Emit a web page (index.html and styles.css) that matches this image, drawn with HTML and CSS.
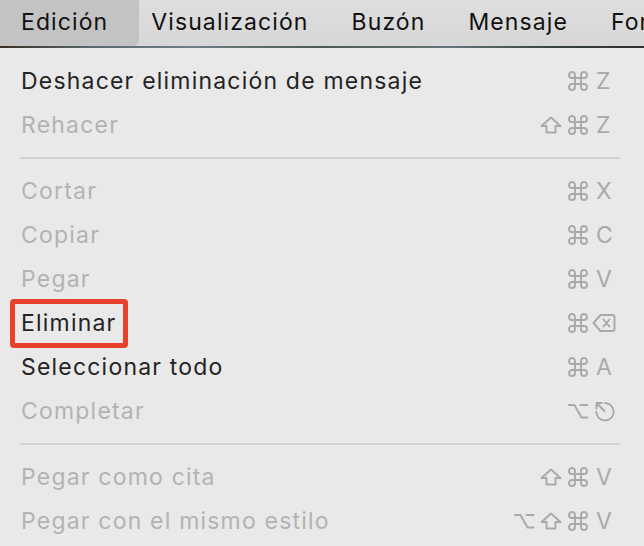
FILE: index.html
```html
<!DOCTYPE html>
<html lang="es">
<head>
<meta charset="utf-8">
<title>Edición</title>
<link rel="stylesheet" href="styles.css">
</head>
<body>
<div class="menubar">
  <span class="mb-item active">Edición</span>
  <span class="mb-item">Visualización</span>
  <span class="mb-item">Buzón</span>
  <span class="mb-item">Mensaje</span>
  <span class="mb-item">Formato</span>
</div>
<div class="strip"></div>
<div class="panel">
  <div class="row"><span class="label">Deshacer eliminación de mensaje</span>
    <span class="sc"><span class="mods"><svg class="ic cmd" viewBox="0 0 20 18"><path d="M7 6 V3 A3 3 0 1 0 4 6 H16 A3 3 0 1 0 13 3 V15 A3 3 0 1 0 16 12 H4 A3 3 0 1 0 7 15 Z"/></svg></span><span class="key">Z</span></span></div>
  <div class="row dis"><span class="label">Rehacer</span>
    <span class="sc"><span class="mods"><svg class="ic shift" viewBox="0 0 22 18"><path d="M11 1.5 L20.5 10 H15.5 V16.5 H6.5 V10 H1.5 Z"/></svg><svg class="ic cmd" viewBox="0 0 20 18"><path d="M7 6 V3 A3 3 0 1 0 4 6 H16 A3 3 0 1 0 13 3 V15 A3 3 0 1 0 16 12 H4 A3 3 0 1 0 7 15 Z"/></svg></span><span class="key">Z</span></span></div>
  <div class="sep"></div>
  <div class="row dis"><span class="label">Cortar</span>
    <span class="sc"><span class="mods"><svg class="ic cmd" viewBox="0 0 20 18"><path d="M7 6 V3 A3 3 0 1 0 4 6 H16 A3 3 0 1 0 13 3 V15 A3 3 0 1 0 16 12 H4 A3 3 0 1 0 7 15 Z"/></svg></span><span class="key">X</span></span></div>
  <div class="row dis"><span class="label">Copiar</span>
    <span class="sc"><span class="mods"><svg class="ic cmd" viewBox="0 0 20 18"><path d="M7 6 V3 A3 3 0 1 0 4 6 H16 A3 3 0 1 0 13 3 V15 A3 3 0 1 0 16 12 H4 A3 3 0 1 0 7 15 Z"/></svg></span><span class="key">C</span></span></div>
  <div class="row dis"><span class="label">Pegar</span>
    <span class="sc"><span class="mods"><svg class="ic cmd" viewBox="0 0 20 18"><path d="M7 6 V3 A3 3 0 1 0 4 6 H16 A3 3 0 1 0 13 3 V15 A3 3 0 1 0 16 12 H4 A3 3 0 1 0 7 15 Z"/></svg></span><span class="key">V</span></span></div>
  <div class="row highlight"><span class="label">Eliminar</span>
    <span class="sc"><span class="mods"><svg class="ic cmd" viewBox="0 0 20 18"><path d="M7 6 V3 A3 3 0 1 0 4 6 H16 A3 3 0 1 0 13 3 V15 A3 3 0 1 0 16 12 H4 A3 3 0 1 0 7 15 Z"/></svg></span><span class="key"><svg class="ic del" viewBox="0 0 24 20"><path d="M8.5 2 H20.5 Q22.5 2 22.5 4 V16 Q22.5 18 20.5 18 H8.5 L1.5 10 Z M11.5 6.5 L17.5 13.5 M17.5 6.5 L11.5 13.5"/></svg></span></span>
    <span class="annot"></span></div>
  <div class="row"><span class="label">Seleccionar todo</span>
    <span class="sc"><span class="mods"><svg class="ic cmd" viewBox="0 0 20 18"><path d="M7 6 V3 A3 3 0 1 0 4 6 H16 A3 3 0 1 0 13 3 V15 A3 3 0 1 0 16 12 H4 A3 3 0 1 0 7 15 Z"/></svg></span><span class="key">A</span></span></div>
  <div class="row dis"><span class="label">Completar</span>
    <span class="sc"><span class="mods"><svg class="ic opt" viewBox="0 0 20 16"><path d="M1 2 H6.5 L13.5 14.5 H19.5 M12.5 2 H19.5"/></svg></span><span class="key"><svg class="ic esc" viewBox="0 0 22 21"><path d="M12 2 A8.7 8.7 0 1 1 3.3 10.7 M11.5 10 L3.5 2 M3.5 2 H9 M3.5 2 V7.5"/></svg></span></span></div>
  <div class="sep"></div>
  <div class="row dis"><span class="label">Pegar como cita</span>
    <span class="sc"><span class="mods"><svg class="ic shift" viewBox="0 0 22 18"><path d="M11 1.5 L20.5 10 H15.5 V16.5 H6.5 V10 H1.5 Z"/></svg><svg class="ic cmd" viewBox="0 0 20 18"><path d="M7 6 V3 A3 3 0 1 0 4 6 H16 A3 3 0 1 0 13 3 V15 A3 3 0 1 0 16 12 H4 A3 3 0 1 0 7 15 Z"/></svg></span><span class="key">V</span></span></div>
  <div class="row dis"><span class="label">Pegar con el mismo estilo</span>
    <span class="sc"><span class="mods"><svg class="ic opt" viewBox="0 0 20 16"><path d="M1 2 H6.5 L13.5 14.5 H19.5 M12.5 2 H19.5"/></svg><svg class="ic shift" viewBox="0 0 22 18"><path d="M11 1.5 L20.5 10 H15.5 V16.5 H6.5 V10 H1.5 Z"/></svg><svg class="ic cmd" viewBox="0 0 20 18"><path d="M7 6 V3 A3 3 0 1 0 4 6 H16 A3 3 0 1 0 13 3 V15 A3 3 0 1 0 16 12 H4 A3 3 0 1 0 7 15 Z"/></svg></span><span class="key">V</span></span></div>
</div>
</body>
</html>
```
FILE: styles.css
```css
html, body {
  margin: 0;
  padding: 0;
}
body {
  width: 644px;
  height: 546px;
  overflow: hidden;
  background: #e9e9e9;
  font-family: "Inter", "Liberation Sans", sans-serif;
  -webkit-font-smoothing: antialiased;
}
.menubar {
  height: 46px;
  display: flex;
  align-items: stretch;
  background: linear-gradient(#dedede, #d7d7d7);
  white-space: nowrap;
  overflow: hidden;
}
.mb-item {
  display: flex;
  align-items: center;
  padding: 0 21.5px 2px;
  font-size: 23px;
  letter-spacing: 1.1px;
  color: #111;
}
.mb-item.active {
  padding: 0 31px 2px 21px;
  margin-right: -9.5px;
  background: #c3c3c3;
  border-bottom-right-radius: 6px;
}
.strip {
  height: 2px;
  background: linear-gradient(90deg, #3a2e24 0%, #5b6a70 15%, #6d7f86 30%, #4c5a4e 50%, #66757a 70%, #3a4440 85%, #2c3030 100%);
}
.panel {
  padding: 11px 0 0 0;
}
.row {
  position: relative;
  height: 44px;
  display: flex;
  align-items: center;
  justify-content: space-between;
  padding: 0 24px 0 21px;
  font-size: 23px;
  letter-spacing: 1.2px;
  color: #242424;
}
.row.dis {
  color: #b3b3b3;
}
.sep {
  height: 22px;
  display: flex;
  align-items: center;
  padding: 0 24px 0 20px;
}
.sep::before {
  content: "";
  flex: 1;
  height: 2px;
  background: #d2d2d2;
}
.sc {
  display: flex;
  align-items: center;
  color: #a9a9a9;
  letter-spacing: 0;
}
.mods {
  display: flex;
  align-items: center;
  gap: 6px;
}
.key {
  width: 24px;
  padding-left: 8px;
  display: flex;
  align-items: center;
}
.ic {
  fill: none;
  stroke: #a9a9a9;
  stroke-width: 1.9;
  stroke-linejoin: round;
  stroke-linecap: round;
  overflow: visible;
}
.ic.cmd { width: 20px; height: 18px; }
.ic.shift { width: 22px; height: 18px; }
.ic.opt { width: 20px; height: 16px; }
.ic.del { width: 24px; height: 20px; margin-left: -4px; }
.ic.esc { width: 22px; height: 21px; margin-left: -3px; }
.annot {
  position: absolute;
  left: 10px;
  top: -2px;
  width: 118px;
  height: 49px;
  box-sizing: border-box;
  border: 5px solid #e8412b;
  border-radius: 4px;
}
```
